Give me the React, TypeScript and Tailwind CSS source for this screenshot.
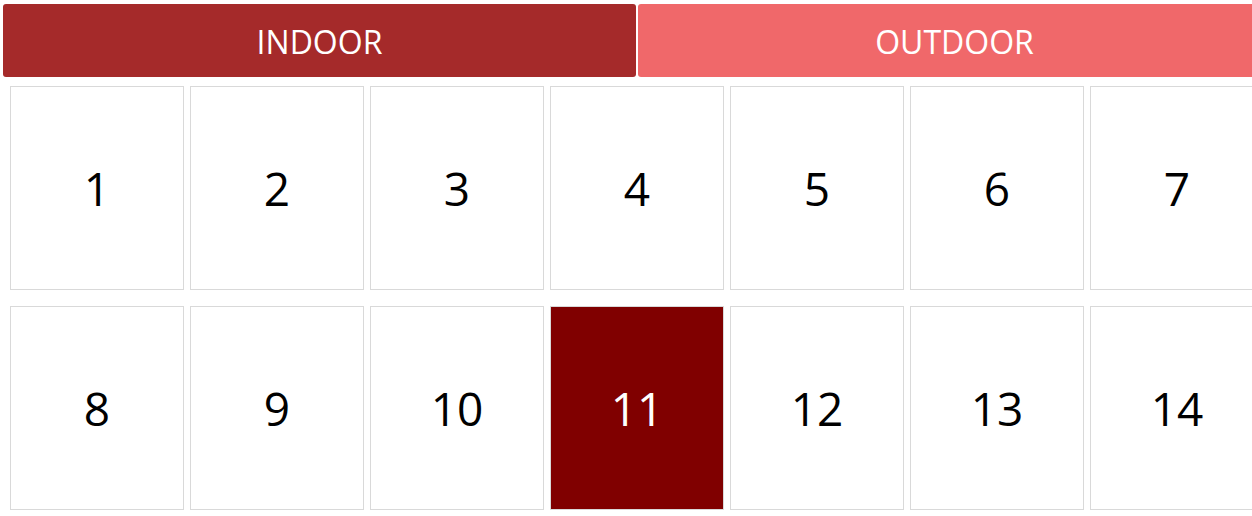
import React from "react";

const days = [1, 2, 3, 4, 5, 6, 7, 8, 9, 10, 11, 12, 13, 14];
const selected = 11;

export default function App() {
  return (
    <div
      className="w-[1252px] h-[516px] overflow-hidden bg-white"
      style={{ fontFamily: '"Open Sans", "Noto Sans", sans-serif' }}
    >
      <div className="w-[1280px] pl-[3px] pt-[4px]">
        <div className="flex gap-[2px]">
          <button className="w-[633px] h-[73px] rounded-[3px] bg-[#a52a2a] text-white text-[32px] flex items-center justify-center pt-[3px]">
            INDOOR
          </button>
          <button className="w-[633px] h-[73px] rounded-[3px] bg-[#f0686a] text-white text-[32px] flex items-center justify-center pt-[3px]">
            OUTDOOR
          </button>
        </div>
        <div className="grid grid-cols-[repeat(7,174px)] gap-x-[6px] gap-y-[16px] pl-[7px] pt-[9px]">
          {days.map((d) => (
            <div
              key={d}
              className={
                d === selected
                  ? "h-[204px] border border-[#d9d9d9] bg-[#800000] text-white text-[46px] flex items-center justify-center"
                  : "h-[204px] border border-[#d9d9d9] bg-white text-black text-[46px] flex items-center justify-center"
              }
            >
              {d}
            </div>
          ))}
        </div>
      </div>
    </div>
  );
}
